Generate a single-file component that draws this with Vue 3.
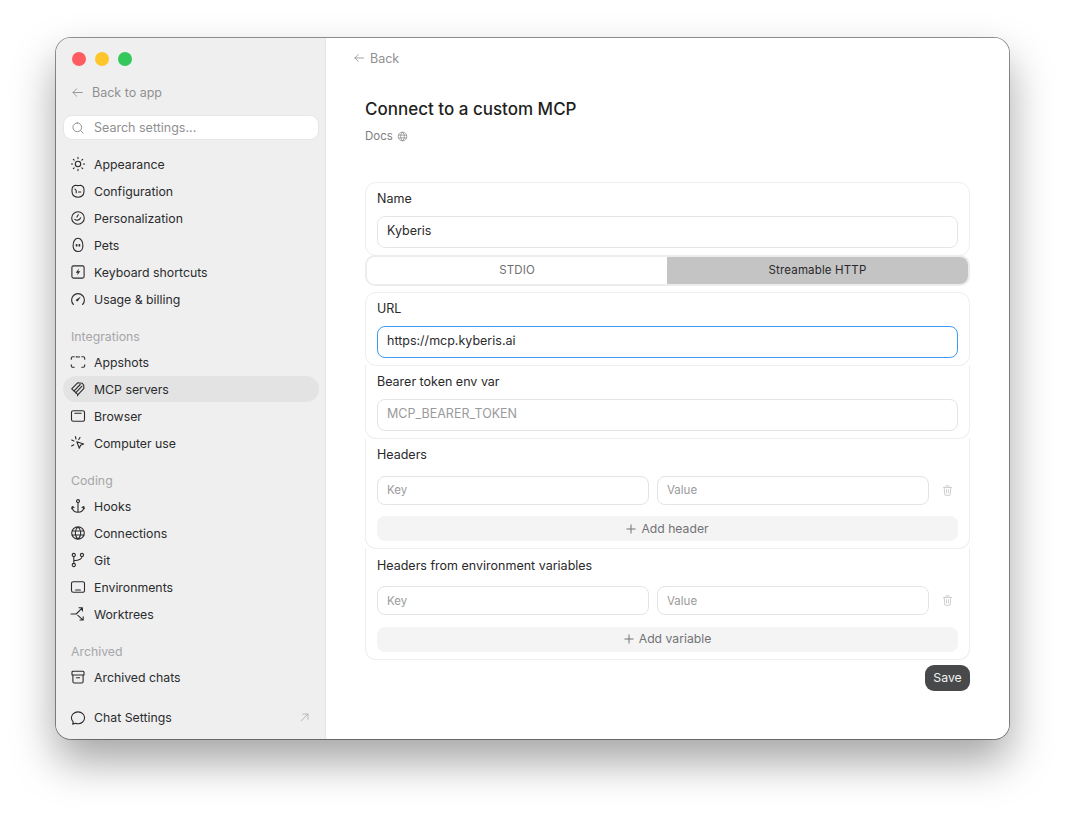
<script setup>
const groups = [
  {
    label: null,
    items: [
      { name: 'Appearance', icon: 'sun' },
      { name: 'Configuration', icon: 'config' },
      { name: 'Personalization', icon: 'smile' },
      { name: 'Pets', icon: 'pet' },
      { name: 'Keyboard shortcuts', icon: 'bolt' },
      { name: 'Usage & billing', icon: 'gauge' }
    ]
  },
  {
    label: 'Integrations',
    items: [
      { name: 'Appshots', icon: 'shots' },
      { name: 'MCP servers', icon: 'mcp', active: true },
      { name: 'Browser', icon: 'browser' },
      { name: 'Computer use', icon: 'cursor' }
    ]
  },
  {
    label: 'Coding',
    items: [
      { name: 'Hooks', icon: 'anchor' },
      { name: 'Connections', icon: 'globe' },
      { name: 'Git', icon: 'git' },
      { name: 'Environments', icon: 'env' },
      { name: 'Worktrees', icon: 'tree' }
    ]
  },
  {
    label: 'Archived',
    items: [{ name: 'Archived chats', icon: 'archive' }]
  }
]

const icons = {
  sun: 'M8 5.300a2.700 2.700 0 1 0 0 5.400a2.700 2.700 0 0 0 0-5.400zM8 1.400v1.200M8 13.400v1.200M1.400 8h1.200M13.400 8h1.200M3.300 3.300l.9.900M11.800 11.800l.9.900M3.300 12.700l.9-.9M11.800 4.200l.9-.9',
  config: 'M5.500 2.200c1.500.5 3.500.5 5 0c2 .4 3 1.200 3.300 3c.4 2.200.4 4 -.2 5.600c-.8 2.200-2.800 3.400-5.600 3.400s-4.800-1.200-5.600-3.400c-.6-1.600-.6-3.400-.2-5.600c.3-1.800 1.300-2.600 3.300-3zM5 6.200l1.200 1.100v2.400M8.400 9h2.400',
  smile: 'M8 1.700a6.300 6.300 0 1 0 0 12.600a6.300 6.300 0 0 0 0-12.600zM4.800 9.400c1.500 1.300 4.700 1.100 5.900-1.600M8.300 4.800L6.900 7',
  pet: 'M8 1.300c-2.900 0-4.900 3.300-4.900 7.100c0 3.700 2 6.100 4.900 6.100s4.900-2.400 4.900-6.100c0-3.800-2-7.100-4.900-7.100zM6.300 7.600v1.400M6.900 7.600v1.400M9.100 7.600v1.400M9.700 7.600v1.400',
  bolt: 'M3.400 1.900h9.200a1.500 1.500 0 0 1 1.500 1.500v9.200a1.500 1.500 0 0 1-1.500 1.500H3.400a1.500 1.500 0 0 1-1.500-1.500V3.400a1.500 1.500 0 0 1 1.500-1.500z',
  gauge: 'M3.400 13.500A6.400 6.400 0 1 1 12.600 13.500',
  shots: 'M1.300 5.200V4.300A1.600 1.600 0 0 1 2.900 2.700H4.200M11.800 2.700h1.300a1.600 1.600 0 0 1 1.600 1.600v.9M14.700 10.800v.9a1.600 1.600 0 0 1-1.600 1.600h-1.300M4.200 13.300H2.900a1.600 1.600 0 0 1-1.600-1.600v-.9M6.200 2.900h1.200M8.600 2.900h.8',
  mcp: 'M1.700 7.800L7.600 1.800l4.600.5l1.500 1.700l.2 3.400l-5.900 6.200zM3.900 10.100L10.200 3.500M5.600 11.800L12 5.200M7.800 13.600l-.2 1.200',
  browser: 'M3.300 2.700h9.400a1.800 1.800 0 0 1 1.800 1.800v7a1.800 1.800 0 0 1-1.800 1.800H3.300a1.800 1.800 0 0 1-1.800-1.800v-7a1.800 1.800 0 0 1 1.800-1.800zM4.800 5.200h6.400',
  cursor: 'M6.800 6.800l6.800 2.200l-3 1.300l-1.300 3zM5.400 1.600l.6 2.400M1.700 5l2.200 1M1.600 11l2.200-1.200M10 2.400L8.800 4.600',
  anchor: 'M8 1.600a1.500 1.500 0 1 0 0 3a1.500 1.500 0 0 0 0-3zM8 4.600v9.600M2.200 9.200c.2 3 2.500 5 5.800 5s5.600-2 5.800-5M1.700 10.600l.5-2l1.800 1M14.300 10.600l-.5-2l-1.800 1',
  globe: 'M8 1.700a6.300 6.300 0 1 0 0 12.600a6.300 6.300 0 0 0 0-12.600zM1.900 6h12.200M1.900 10h12.200M8 1.700c-3.600 3.600-3.600 9 0 12.600M8 1.700c3.600 3.600 3.600 9 0 12.600',
  git: 'M3.800 1.400a1.600 1.600 0 1 0 0 3.200a1.600 1.600 0 0 0 0-3.200zM12 1.400a1.600 1.600 0 1 0 0 3.200a1.600 1.600 0 0 0 0-3.200zM3.800 11.400a1.600 1.600 0 1 0 0 3.200a1.600 1.600 0 0 0 0-3.200zM3.800 4.600v6.800M12 4.600c0 2.800-3 3.800-8.200 4.200',
  env: 'M3.300 2.700h9.400a1.800 1.800 0 0 1 1.800 1.800v7a1.800 1.800 0 0 1-1.800 1.800H3.300a1.800 1.800 0 0 1-1.800-1.800v-7a1.800 1.800 0 0 1 1.800-1.800zM5.600 11h4.800',
  tree: 'M1 8h5.200L11.800 2.400M9 1.800h3.400v3.200M7.800 9.400l4.800 4.200M13.200 10.800v3.200H10',
  archive: 'M3 2.200h10a1 1 0 0 1 1 1V6H2V3.200a1 1 0 0 1 1-1zM2.900 6v6.600A1.400 1.400 0 0 0 4.300 14h7.400a1.400 1.400 0 0 0 1.400-1.400V6M6.400 8.800h3.200',
  chat: 'M8 1.900c-3.700 0-6.600 2.600-6.600 5.900c0 1.600.7 3 1.800 4.100l-.5 2.300l2.600-1c.8.300 1.700.5 2.700.5c3.700 0 6.600-2.600 6.600-5.900S11.700 1.900 8 1.900z'
}

// small solid parts drawn over the outline of an icon
const fills = {
  bolt: 'M9 4.600L5.700 8.700h2.100L7 11.400l3.300-4.100H8.200z',
  gauge: 'M6.300 8.400L10.800 5.400L8 9.900a1 1 0 0 1-1.700-1.500z'
}

const trash = 'M3 4.200h10M6.200 4V3a1 1 0 0 1 1-1h1.600a1 1 0 0 1 1 1v1M4 4.200l.5 8.300A1.500 1.500 0 0 0 6 14h4a1.500 1.500 0 0 0 1.500-1.500l.5-8.300M6.800 7v4M9.200 7v4'
</script>

<template>
  <div class="page">
    <div class="window">
      <aside class="sidebar">
        <div class="lights">
          <span class="light red"></span>
          <span class="light yellow"></span>
          <span class="light green"></span>
        </div>

        <div class="back-app">
          <svg class="icon" viewBox="0 0 16 16"><path d="M14 8H2.500M7 3.400L2.400 8L7 12.600" /></svg>
          <span>Back to app</span>
        </div>

        <div class="search">
          <svg class="icon" viewBox="0 0 16 16"><path d="M7.200 2.200a5 5 0 1 0 0 10a5 5 0 0 0 0-10zM11 11l3 3" /></svg>
          <span>Search settings...</span>
        </div>

        <nav class="nav">
          <section v-for="group in groups" :key="group.label || 'main'" class="nav-group">
            <div v-if="group.label" class="nav-label">{{ group.label }}</div>
            <div v-for="item in group.items" :key="item.name" class="nav-item" :class="{ active: item.active }">
              <svg class="icon" viewBox="0 0 16 16">
                <path :d="icons[item.icon]" />
                <path v-if="fills[item.icon]" class="solid" :d="fills[item.icon]" />
              </svg>
              <span>{{ item.name }}</span>
            </div>
          </section>
        </nav>

        <div class="chat-settings">
          <svg class="icon" viewBox="0 0 16 16"><path :d="icons.chat" /></svg>
          <span>Chat Settings</span>
          <svg class="icon external" viewBox="0 0 16 16"><path d="M3 13L13 3M5.500 3H13v7.500" /></svg>
        </div>
      </aside>

      <main class="content">
        <div class="back">
          <svg class="icon" viewBox="0 0 16 16"><path d="M14 8H2.500M7 3.400L2.400 8L7 12.600" /></svg>
          <span>Back</span>
        </div>

        <div class="body">
          <h1>Connect to a custom MCP</h1>
          <div class="docs">
            <span>Docs</span>
            <svg viewBox="0 0 16 16"><path :d="icons.globe" /></svg>
          </div>

          <form class="form" @submit.prevent>
            <div class="card">
              <label>Name</label>
              <input class="field" type="text" value="Kyberis" />
            </div>

            <div class="segmented">
              <button type="button" class="segment">STDIO</button>
              <button type="button" class="segment selected">Streamable HTTP</button>
            </div>

            <div class="card url-card">
              <label>URL</label>
              <input class="field focused" type="text" value="https://mcp.kyberis.ai" />
            </div>

            <div class="card joined">
              <label>Bearer token env var</label>
              <input class="field" type="text" placeholder="MCP_BEARER_TOKEN" />
            </div>

            <div class="card joined list-card">
              <label>Headers</label>
              <div class="pair">
                <input class="field small" type="text" placeholder="Key" />
                <input class="field small" type="text" placeholder="Value" />
                <svg class="trash" viewBox="0 0 16 16"><path :d="trash" /></svg>
              </div>
              <button type="button" class="add">
                <svg viewBox="0 0 10 10"><path d="M5 .5v9M.5 5h9" /></svg>
                <span>Add header</span>
              </button>
            </div>

            <div class="card joined list-card last">
              <label>Headers from environment variables</label>
              <div class="pair">
                <input class="field small" type="text" placeholder="Key" />
                <input class="field small" type="text" placeholder="Value" />
                <svg class="trash" viewBox="0 0 16 16"><path :d="trash" /></svg>
              </div>
              <button type="button" class="add">
                <svg viewBox="0 0 10 10"><path d="M5 .5v9M.5 5h9" /></svg>
                <span>Add variable</span>
              </button>
            </div>

            <div class="actions">
              <button type="submit" class="save">Save</button>
            </div>
          </form>
        </div>
      </main>
    </div>
  </div>
</template>

<style>
html,
body {
  margin: 0;
  background: #fff;
}
</style>

<style scoped>
.page {
  width: 1065px;
  height: 813px;
  padding: 38px 56px 74px;
  box-sizing: border-box;
  overflow: hidden;
  background: #fff;
  font-family: Inter, "Liberation Sans", sans-serif;
  font-size: 12.5px;
  color: #2b2b2d;
}

.window {
  display: flex;
  width: 953px;
  height: 701px;
  border-radius: 15px;
  background: #fff;
  box-shadow: 0 0 0 1px rgba(0, 0, 0, 0.42), 0 22px 44px rgba(0, 0, 0, 0.36);
  overflow: hidden;
}

.icon {
  flex: none;
  width: 16px;
  height: 16px;
  fill: none;
  stroke: currentColor;
  stroke-width: 1.1;
  stroke-linecap: round;
  stroke-linejoin: round;
}

.icon .solid {
  fill: currentColor;
  stroke: none;
}

.sidebar {
  display: flex;
  flex-direction: column;
  flex: none;
  width: 270px;
  box-sizing: border-box;
  padding: 14px 6px 0 7px;
  background: #efefef;
  border-right: 1px solid #e4e4e4;
}

.lights {
  display: flex;
  gap: 9px;
  padding-left: 9px;
}

.light {
  width: 14px;
  height: 14px;
  border-radius: 50%;
}

.red {
  background: #fe5c60;
}

.yellow {
  background: #fec62a;
}

.green {
  background: #34c759;
}

.back-app {
  display: flex;
  align-items: center;
  gap: 8px;
  height: 20px;
  margin-top: 16px;
  padding-left: 8px;
  color: #8f8f91;
}

.back-app .icon {
  width: 13px;
  height: 13px;
}

.search {
  display: flex;
  align-items: center;
  gap: 9px;
  height: 25px;
  margin-top: 13px;
  padding-left: 7px;
  box-sizing: border-box;
  border-radius: 9px;
  background: #fff;
  border: 1px solid #e6e6e6;
  color: #8f8f91;
}

.search .icon {
  width: 14px;
  height: 14px;
}

.nav {
  margin-top: 11px;
  font-size: 12.3px;
}

.nav-group + .nav-group {
  margin-top: 12px;
}

.nav-label {
  height: 25px;
  line-height: 25px;
  padding-left: 8px;
  color: #a6a6a8;
}

.nav-item {
  display: flex;
  align-items: center;
  gap: 8px;
  height: 26px;
  margin-bottom: 1px;
  padding-left: 7px;
  border-radius: 13px;
}

.nav-item.active {
  background: #e2e3e2;
}

.chat-settings {
  display: flex;
  align-items: center;
  gap: 8px;
  height: 27px;
  margin-top: 13px;
  padding: 0 9px 0 7px;
  font-size: 12.3px;
}

.chat-settings .external {
  margin-left: auto;
  width: 11px;
  height: 11px;
  color: #a8a8a8;
}

.content {
  flex: 1;
  min-width: 0;
  background: #fff;
}

.back {
  display: flex;
  align-items: center;
  gap: 5px;
  height: 20px;
  margin: 10px 0 0 27px;
  color: #8f8f91;
}

.back .icon {
  width: 12px;
  height: 12px;
}

.body {
  padding: 0 39px;
}

h1 {
  margin: 26px 0 0;
  font-size: 17px;
  line-height: 30px;
  font-weight: 500;
  color: #1f1f21;
}

.docs {
  display: flex;
  align-items: center;
  gap: 4px;
  height: 16px;
  margin-top: 4px;
  font-size: 11.5px;
  color: #7d7d7f;
}

.docs svg {
  width: 11px;
  height: 11px;
  fill: none;
  stroke: currentColor;
  stroke-width: 1;
}

.form {
  margin-top: 38px;
}

.card {
  display: flex;
  flex-direction: column;
  height: 74px;
  margin-bottom: -1px;
  box-sizing: border-box;
  padding: 7px 11px 0;
  border: 1px solid #eeeeee;
  border-radius: 11px;
}

.card.joined {
  border-top: 0;
  border-radius: 0 0 11px 11px;
  padding-top: 8px;
}

.url-card {
  margin-top: 6px;
}

label {
  height: 18px;
  line-height: 18px;
  color: #29292b;
}

.field {
  width: 100%;
  height: 32px;
  margin-top: 8px;
  padding: 0 9px 3px;
  box-sizing: border-box;
  border: 1px solid #e4e4e4;
  border-radius: 8px;
  outline: none;
  background: #fff;
  font: inherit;
  color: #2b2b2d;
}

.field::placeholder {
  color: #9a9a9c;
}

.field.focused {
  border-color: #3f9bf5;
}

.field.small {
  height: 29px;
  margin-top: 0;
  padding-bottom: 1px;
  font-size: 11.5px;
}

.segmented {
  display: flex;
  height: 31px;
  box-sizing: border-box;
  border: 2px solid #ececec;
  border-radius: 10px;
  overflow: hidden;
}

.segment {
  flex: 1;
  border: 0;
  padding: 0 0 1px;
  background: #fff;
  font: inherit;
  font-size: 11.5px;
  letter-spacing: 0.15px;
  color: #6f6f71;
}

.segment:first-child {
  flex: none;
  width: 300px;
}

.segment.selected {
  background: #c4c4c4;
  color: #29292b;
}

.list-card {
  height: 111px;
}

.card.joined.last {
  height: 112px;
  margin-bottom: 0;
  padding-top: 9px;
}

.pair {
  display: grid;
  grid-template-columns: 272px 272px 1fr;
  gap: 8px;
  align-items: center;
  margin-top: 12px;
}

.last .pair {
  margin-top: 11px;
}

.last .field.small {
  padding-bottom: 0;
}

.trash {
  justify-self: center;
  width: 13px;
  height: 13px;
  fill: none;
  stroke: #c9c9c9;
  stroke-width: 1.1;
  stroke-linecap: round;
  stroke-linejoin: round;
}

.add {
  display: flex;
  align-items: center;
  justify-content: center;
  gap: 5px;
  height: 25px;
  margin-top: 11px;
  padding: 0;
  border: 0;
  border-radius: 8px;
  background: #f4f4f4;
  font: inherit;
  font-size: 12.2px;
  color: #727274;
}

.last .add {
  margin-top: 12px;
  padding-bottom: 2px;
}

.add svg {
  width: 10px;
  height: 10px;
  fill: none;
  stroke: currentColor;
  stroke-width: 1;
}

.actions {
  display: flex;
  justify-content: flex-end;
  margin-top: 5px;
}

.save {
  width: 45px;
  height: 26px;
  padding: 0 0 2px;
  border: 0;
  border-radius: 9px;
  background: #48494b;
  font: inherit;
  font-size: 12.3px;
  color: #f2f2f2;
}
</style>
